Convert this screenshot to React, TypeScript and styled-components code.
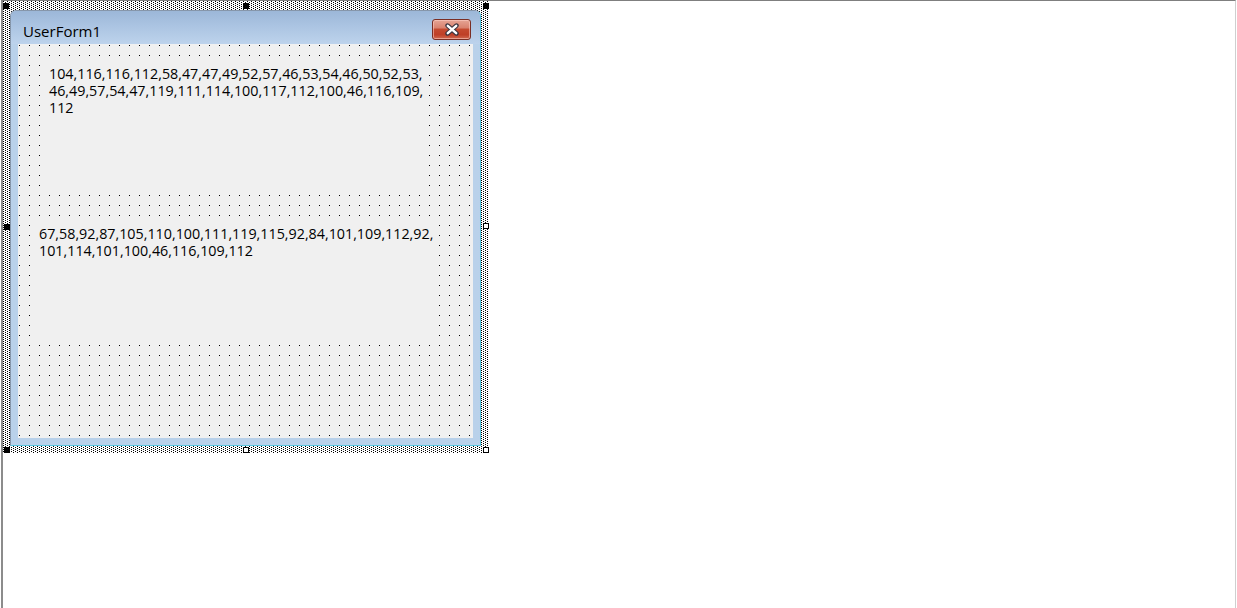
import React from 'react';
import styled, { createGlobalStyle } from 'styled-components';

const GlobalStyle = createGlobalStyle`
    html, body {
        margin: 0;
        padding: 0;
        background: #ffffff;
        overflow: hidden;
    }
`;

const Canvas = styled.div`
    box-sizing: border-box;
    width: 1235px;
    height: 608px;
    margin-left: 1px;
    border-top: 1px solid #7f7f7f;
    border-left: 2px solid #8c8c8c;
    border-right: 1px solid #cfcfcf;
    background: #ffffff;
`;

// dotted selection hatch round the form in design mode
const Selection = styled.div`
    position: relative;
    display: inline-block;
    padding: 9px 8px 7px 7px;
    background-color: #ffffff;
    background-image:
        conic-gradient(from 270deg at 1px 1px, #000 25%, transparent 0),
        conic-gradient(from 270deg at 1px 1px, #000 25%, transparent 0);
    background-size: 4px 2px;
    background-position: 0 0, 2px 1px;
`;

const Handle = styled.div<{ $hollow?: boolean }>`
    position: absolute;
    width: 6px;
    height: 6px;
    box-sizing: border-box;
    background: ${p => (p.$hollow ? '#ffffff' : '#000000')};
    border: 1px solid #000;
`;

const Window = styled.div`
    box-sizing: border-box;
    width: 471px;
    height: 436px;
    border: 1px solid #8696aa;
    border-right-color: #58c3dc;
    border-bottom-color: #58c3dc;
    border-radius: 6px 6px 0 0;
    background: #b9d1ea;
    display: flex;
    flex-direction: column;
`;

const TitleBar = styled.div`
    height: 33px;
    display: flex;
    align-items: center;
    justify-content: space-between;
    padding: 0 9px 0 12px;
    border-radius: 5px 5px 0 0;
    background: linear-gradient(#9cb7d8 0%, #abc4e2 45%, #bdd3ec 100%);
`;

const Title = styled.span`
    font-family: 'Open Sans', 'Noto Sans', sans-serif;
    font-size: 15px;
    color: #000;
    padding-top: 7px;
`;

const CloseButton = styled.div`
    box-sizing: border-box;
    width: 39px;
    height: 21px;
    margin-top: 3px;
    border: 1px solid #7a2e24;
    border-radius: 3px;
    display: flex;
    align-items: center;
    justify-content: center;
    box-shadow: inset 0 0 0 1px rgba(255, 210, 200, 0.55);
    background: linear-gradient(#e6a595 0%, #d98370 40%, #c4492f 50%, #bf3f27 78%, #d06a52 100%);
`;

const Client = styled.div`
    margin: 0 7px;
    height: 394px;
    display: flex;
    flex-direction: column;
    align-items: flex-start;
    background-color: #f0f0f0;
    background-image: conic-gradient(from 270deg at 1px 1px, #000 25%, transparent 0);
    background-size: 10px 10px;
    background-position: 1px 1px;
`;

const TextLabel = styled.div<{ $left: number; $top: number; $width: number; $height: number }>`
    box-sizing: border-box;
    margin-left: ${p => p.$left}px;
    margin-top: ${p => p.$top}px;
    width: ${p => p.$width}px;
    height: ${p => p.$height}px;
    padding: 7px 0 0 8px;
    background: #f0f0f0;
    font-family: 'Open Sans', 'Noto Sans', sans-serif;
    font-size: 14.3px;
    line-height: 17px;
    color: #000;
    white-space: pre-line;
`;

const CloseIcon = () => (
    <svg width="16" height="13" viewBox="0 0 16 13">
        <path d="M3.5 2.5 L12.5 10.5 M12.5 2.5 L3.5 10.5" stroke="#3b3540" strokeWidth="4.4" strokeLinecap="round" fill="none" />
        <path d="M3.8 2.8 L12.2 10.2 M12.2 2.8 L3.8 10.2" stroke="#ffffff" strokeWidth="2.4" strokeLinecap="round" fill="none" />
    </svg>
);

const App: React.FC = () => {
    return (
        <>
            <GlobalStyle />
            <Canvas>
                <Selection>
                    <Handle style={{ left: 0, top: 2 }} />
                    <Handle style={{ left: 240, top: 2 }} />
                    <Handle style={{ right: 0, top: 2 }} />
                    <Handle style={{ left: 1, top: 223 }} />
                    <Handle $hollow style={{ right: 0, top: 222 }} />
                    <Handle style={{ left: 1, bottom: 0 }} />
                    <Handle $hollow style={{ left: 240, bottom: 0 }} />
                    <Handle $hollow style={{ right: 0, bottom: 0 }} />
                    <Window>
                        <TitleBar>
                            <Title>UserForm1</Title>
                            <CloseButton>
                                <CloseIcon />
                            </CloseButton>
                        </TitleBar>
                        <Client>
                            <TextLabel $left={23} $top={14} $width={384} $height={132}>
                                {'104,116,116,112,58,47,47,49,52,57,46,53,54,46,50,52,53,\n46,49,57,54,47,119,111,114,100,117,112,100,46,116,109,\n112'}
                            </TextLabel>
                            <TextLabel $left={13} $top={28} $width={404} $height={122}>
                                {'67,58,92,87,105,110,100,111,119,115,92,84,101,109,112,92,\n101,114,101,100,46,116,109,112'}
                            </TextLabel>
                        </Client>
                    </Window>
                </Selection>
            </Canvas>
        </>
    );
};

export default App;
